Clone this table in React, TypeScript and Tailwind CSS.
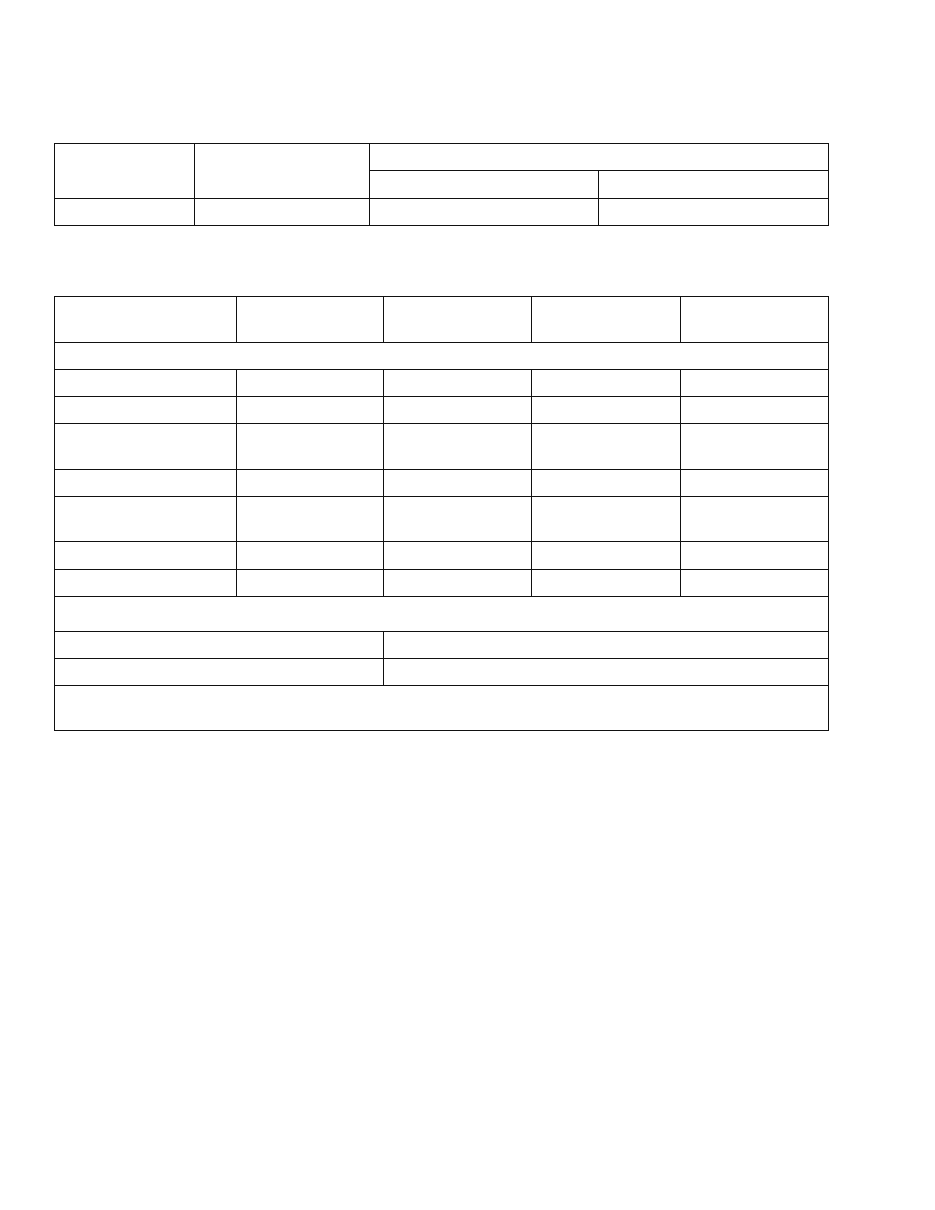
export default function App() {
  const cell = "border border-[#111] p-0";
  return (
    <div className="min-h-[1210px] w-[935px] bg-white pt-[143px] pl-[54px] font-['Liberation_Sans',sans-serif]">
      {/* first table */}
      <table className="table-fixed border-collapse w-[774px]">
        <colgroup>
          <col className="w-[140px]" />
          <col className="w-[175px]" />
          <col className="w-[229px]" />
          <col className="w-[230px]" />
        </colgroup>
        <tbody>
          <tr className="h-[27px]">
            <td className={cell} rowSpan={2}></td>
            <td className={cell} rowSpan={2}></td>
            <td className={cell} colSpan={2}></td>
          </tr>
          <tr className="h-[28px]">
            <td className={cell}></td>
            <td className={cell}></td>
          </tr>
          <tr className="h-[27px]">
            <td className={cell}></td>
            <td className={cell}></td>
            <td className={cell}></td>
            <td className={cell}></td>
          </tr>
        </tbody>
      </table>

      {/* second table */}
      <table className="mt-[70px] table-fixed border-collapse w-[774px]">
        <colgroup>
          <col className="w-[182px]" />
          <col className="w-[147px]" />
          <col className="w-[148px]" />
          <col className="w-[149px]" />
          <col className="w-[148px]" />
        </colgroup>
        <tbody>
          <Five h="h-[46px]" cell={cell} />
          <tr className="h-[27px]">
            <td className={cell} colSpan={5}></td>
          </tr>
          <Five h="h-[27px]" cell={cell} />
          <Five h="h-[27px]" cell={cell} />
          <Five h="h-[46px]" cell={cell} />
          <Five h="h-[27px]" cell={cell} />
          <Five h="h-[45px]" cell={cell} />
          <Five h="h-[28px]" cell={cell} />
          <Five h="h-[27px]" cell={cell} />
          <tr className="h-[35px]">
            <td className={cell} colSpan={5}></td>
          </tr>
          <tr className="h-[27px]">
            <td className={cell} colSpan={2}></td>
            <td className={cell} colSpan={3}></td>
          </tr>
          <tr className="h-[27px]">
            <td className={cell} colSpan={2}></td>
            <td className={cell} colSpan={3}></td>
          </tr>
          <tr className="h-[45px]">
            <td className={cell} colSpan={5}></td>
          </tr>
        </tbody>
      </table>
    </div>
  );
}

function Five({ h, cell }: { h: string; cell: string }) {
  return (
    <tr className={h}>
      <td className={cell}></td>
      <td className={cell}></td>
      <td className={cell}></td>
      <td className={cell}></td>
      <td className={cell}></td>
    </tr>
  );
}
